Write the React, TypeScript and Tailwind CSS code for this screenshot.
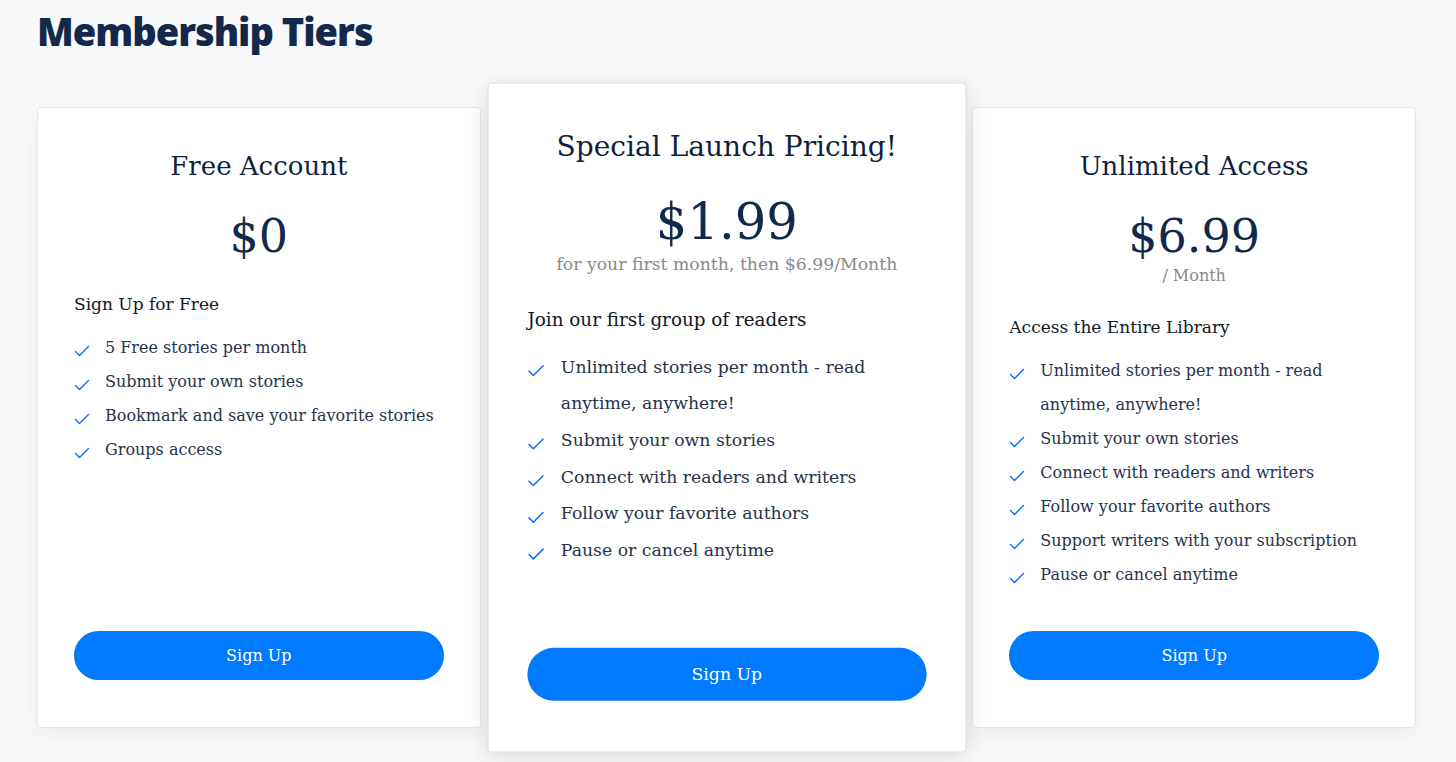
import React from "react";

type Tier = {
  name: string;
  price: string;
  note?: string;
  lead: string;
  perks: string[];
  featured?: boolean;
};

const tiers: Tier[] = [
  {
    name: "Free Account",
    price: "$0",
    lead: "Sign Up for Free",
    perks: [
      "5 Free stories per month",
      "Submit your own stories",
      "Bookmark and save your favorite stories",
      "Groups access",
    ],
  },
  {
    name: "Special Launch Pricing!",
    price: "$1.99",
    note: "for your first month, then $6.99/Month",
    lead: "Join our first group of readers",
    perks: [
      "Unlimited stories per month - read anytime, anywhere!",
      "Submit your own stories",
      "Connect with readers and writers",
      "Follow your favorite authors",
      "Pause or cancel anytime",
    ],
    featured: true,
  },
  {
    name: "Unlimited Access",
    price: "$6.99",
    note: "/ Month",
    lead: "Access the Entire Library",
    perks: [
      "Unlimited stories per month - read anytime, anywhere!",
      "Submit your own stories",
      "Connect with readers and writers",
      "Follow your favorite authors",
      "Support writers with your subscription",
      "Pause or cancel anytime",
    ],
  },
];

const Check = () => (
  <svg
    width="16"
    height="12"
    viewBox="0 0 16 12"
    fill="none"
    className="mt-[14px] shrink-0"
  >
    <path
      d="M1.5 6.5 L5.5 10.5 L14.5 1.5"
      stroke="#0b6cf5"
      strokeWidth="1.4"
      strokeLinecap="round"
      strokeLinejoin="round"
    />
  </svg>
);

const TierCard = ({ tier }: { tier: Tier }) => (
  <div
    className={
      tier.featured
        ? "relative z-10 flex scale-[1.079] flex-col rounded-[4px] border border-[#dcdfe4] bg-white px-9 pt-[42px] pb-[47px] shadow-[0_4px_22px_rgba(0,0,0,0.13)]"
        : "flex flex-col rounded-[4px] border border-[#e4e7eb] bg-white px-9 pt-[42px] pb-[47px] shadow-[0_8px_24px_rgba(0,0,0,0.06)]"
    }
  >
    <h2 className="text-center text-[26px] leading-[32px] text-[#0f1f3d]">
      {tier.name}
    </h2>
    <p className="mt-[28px] text-center text-[46px] leading-[52px] text-[#13294b]">
      {tier.price}
    </p>
    {tier.note && (
      <p className="mt-[5px] text-center text-[16px] leading-[18px] text-[#8a8a8a]">
        {tier.note}
      </p>
    )}
    <h3 className="mt-[30px] text-[17px] leading-[24px] text-[#111827]">
      {tier.lead}
    </h3>
    <ul className="mt-[15px]">
      {tier.perks.map((perk) => (
        <li key={perk} className="flex gap-[15px]">
          <Check />
          <span className="text-[16px] leading-[34px] text-[#27334d]">
            {perk}
          </span>
        </li>
      ))}
    </ul>
    <button className="mt-auto h-[49px] w-full rounded-full bg-[#007bff] text-[16px] text-white">
      Sign Up
    </button>
  </div>
);

export default function App() {
  return (
    <div className="min-h-[762px] bg-[#f8f9fb] pt-[7px] pl-[37px] pr-[40px] font-['DejaVu_Serif',serif]">
      <h1 className="font-['Open_Sans',sans-serif] text-[38px] leading-[48px] font-extrabold tracking-[-1px] text-[#13284b]">
        Membership Tiers
      </h1>
      <div className="mt-[52px] grid h-[621px] grid-cols-3 gap-6">
        {tiers.map((tier) => (
          <TierCard key={tier.name} tier={tier} />
        ))}
      </div>
    </div>
  );
}
